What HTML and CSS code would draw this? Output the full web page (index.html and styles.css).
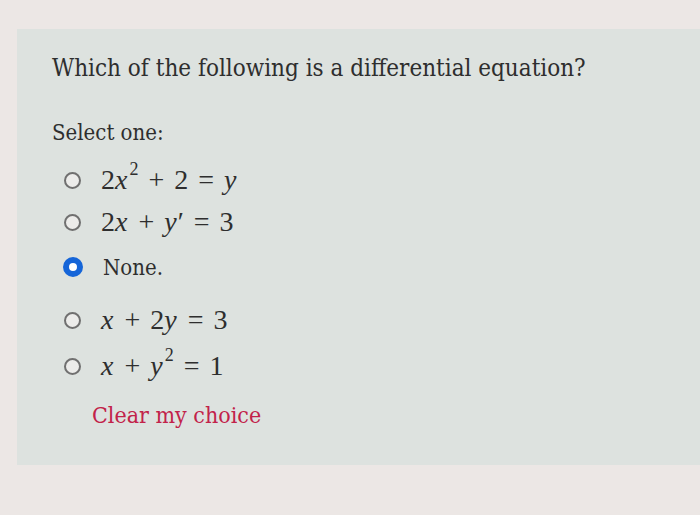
FILE: index.html
```html
<!DOCTYPE html>
<html>
<head>
<meta charset="utf-8">
<link rel="stylesheet" href="styles.css">
</head>
<body>
<div class="page">
  <div class="panel">
    <div class="question">Which of the following is a differential equation?</div>
    <div class="prompt">Select one:</div>
    <div class="answers">
      <div class="opt r1"><span class="radio"></span><span class="math">2<i>x</i><sup>2</sup><span class="op">+</span>2<span class="op">=</span><i>y</i></span></div>
      <div class="opt r2"><span class="radio"></span><span class="math">2<i>x</i><span class="op">+</span><i>y</i>′<span class="op">=</span>3</span></div>
      <div class="opt r3"><span class="radio on"></span><span class="label">None.</span></div>
      <div class="opt r4"><span class="radio"></span><span class="math"><i>x</i><span class="op">+</span>2<i>y</i><span class="op">=</span>3</span></div>
      <div class="opt r5"><span class="radio"></span><span class="math"><i>x</i><span class="op">+</span><i>y</i><sup>2</sup><span class="op">=</span>1</span></div>
    </div>
    <div class="clear">Clear my choice</div>
  </div>
</div>
</body>
</html>
```
FILE: styles.css
```css
html, body { margin: 0; padding: 0; }
body {
  width: 700px; height: 515px; overflow: hidden;
  background: #ece7e5;
  font-family: "DejaVu Serif Condensed", "DejaVu Serif", serif;
  color: #2e2e2e;
}
.page { padding-top: 29px; padding-left: 17px; }
.panel {
  background: #dde2df;
  height: 436px;
  padding: 24px 0 0 35px;
  box-sizing: border-box;
}
.question { font-size: 24px; line-height: 30px; }
.prompt { font-size: 22px; line-height: 28px; margin-top: 36px; }
.answers { display: flex; flex-direction: column; padding-left: 11px; margin-top: 13px; }
.opt { display: flex; align-items: center; height: 40px; }
.r2 { margin-top: 2px; }
.r3 { margin-top: 5px; }
.r4 { margin-top: 13px; }
.r5 { margin-top: 6px; }
.radio {
  width: 13px; height: 13px; border-radius: 50%;
  border: 2px solid #707070;
  background: #ececea;
  margin-left: 1px; margin-right: 20px;
  flex: none;
}
.radio.on {
  width: 8px; height: 8px;
  border: 6px solid #1565d8;
  background: #fff;
  margin-left: 0; margin-right: 20px;
}
.math { font-family: "Liberation Serif", "Times New Roman", serif; font-size: 28px; line-height: 32px; color: #2e2e2e; }
.math i { font-style: italic; margin-right: 1px; }
.op { margin: 0 10px; }
.math sup { font-size: 18px; line-height: 0; position: relative; top: -4px; margin-left: 1px; }
.label { font-size: 22px; }
.clear { color: #c2224a; font-size: 23px; line-height: 28px; margin-left: 40px; margin-top: 15px; }
```
